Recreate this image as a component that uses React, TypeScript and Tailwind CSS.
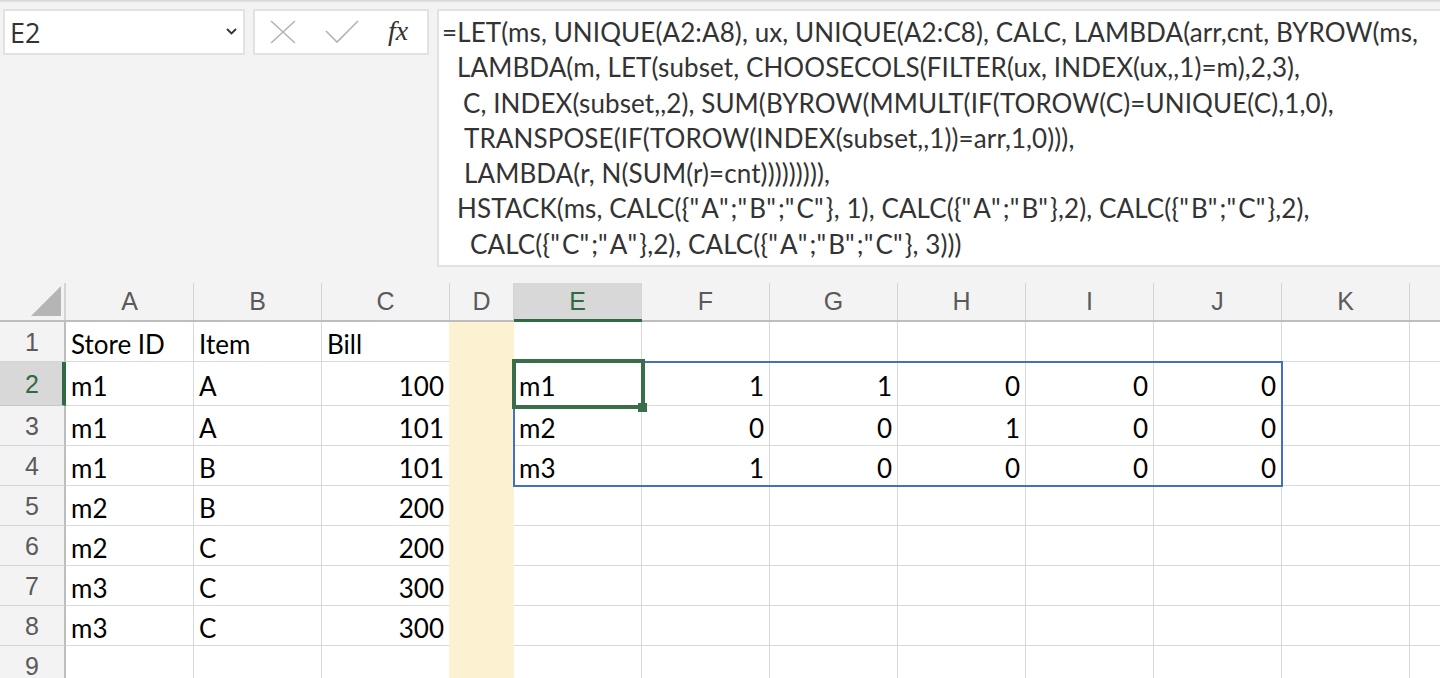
import React from "react";

const FONT = { fontFamily: "Lato, 'Open Sans', sans-serif" };
const HFONT = { fontFamily: "'Liberation Sans', Arial, sans-serif" };

type Col = { k: string; w: number; label?: boolean };
const cols: Col[] = [
  { k: "A", w: 128 },
  { k: "B", w: 128 },
  { k: "C", w: 128 },
  { k: "D", w: 64 },
  { k: "E", w: 128 },
  { k: "F", w: 128 },
  { k: "G", w: 128 },
  { k: "H", w: 128 },
  { k: "I", w: 128 },
  { k: "J", w: 128 },
  { k: "K", w: 128 },
  { k: "L", w: 128, label: false },
];

const rowHeights = [40, 44, 40, 40, 40, 40, 40, 40, 40];

type Cell = { v: string; right?: boolean };
const data: Record<string, Cell> = {};
const put = (ref: string, v: string | number) => {
  data[ref] = { v: String(v), right: typeof v === "number" };
};
put("A1", "Store ID");
put("B1", "Item");
put("C1", "Bill");
const src: [string, string, number][] = [
  ["m1", "A", 100],
  ["m1", "A", 101],
  ["m1", "B", 101],
  ["m2", "B", 200],
  ["m2", "C", 200],
  ["m3", "C", 300],
  ["m3", "C", 300],
];
src.forEach((r, i) => {
  put("A" + (i + 2), r[0]);
  put("B" + (i + 2), r[1]);
  put("C" + (i + 2), r[2]);
});
const res: [string, number, number, number, number, number][] = [
  ["m1", 1, 1, 0, 0, 0],
  ["m2", 0, 0, 1, 0, 0],
  ["m3", 1, 0, 0, 0, 0],
];
res.forEach((r, i) => {
  const row = i + 2;
  put("E" + row, r[0]);
  ["F", "G", "H", "I", "J"].forEach((c, j) => put(c + row, r[j + 1] as number));
});

const formula: { t: string; x: number }[] = [
  { t: "=LET(ms, UNIQUE(A2:A8), ux, UNIQUE(A2:C8), CALC, LAMBDA(arr,cnt, BYROW(ms,", x: 0 },
  { t: "LAMBDA(m, LET(subset, CHOOSECOLS(FILTER(ux, INDEX(ux,,1)=m),2,3),", x: 15 },
  { t: "C, INDEX(subset,,2), SUM(BYROW(MMULT(IF(TOROW(C)=UNIQUE(C),1,0),", x: 21 },
  { t: "TRANSPOSE(IF(TOROW(INDEX(subset,,1))=arr,1,0))),", x: 22 },
  { t: "LAMBDA(r, N(SUM(r)=cnt))))))))),", x: 22 },
  { t: 'HSTACK(ms, CALC({"A";"B";"C"}, 1), CALC({"A";"B"},2), CALC({"B";"C"},2),', x: 15 },
  { t: 'CALC({"C";"A"},2), CALC({"A";"B";"C"}, 3)))', x: 28 },
];

function renderLine(t: string) {
  const parts = t.split('"');
  const out: React.ReactNode[] = [];
  parts.forEach((p, i) => {
    if (i > 0)
      out.push(
        <span key={"q" + i} className="tracking-[2.1px]">
          "
        </span>
      );
    out.push(<React.Fragment key={"p" + i}>{p}</React.Fragment>);
  });
  return out;
}

function XIcon() {
  return (
    <svg width="26" height="24" viewBox="0 0 26 24">
      <path d="M1 1 L25 23 M25 1 L1 23" stroke="#b4b4b4" strokeWidth="1.6" fill="none" />
    </svg>
  );
}
function CheckIcon() {
  return (
    <svg width="34" height="24" viewBox="0 0 34 24">
      <path d="M1 11 L12 22 L33 1" stroke="#b4b4b4" strokeWidth="1.6" fill="none" />
    </svg>
  );
}

export default function App() {
  return (
    <div className="w-[1440px] h-[678px] overflow-hidden bg-white relative" style={FONT}>
      {/* Top formula area */}
      <div className="h-[283px] bg-[#f3f3f3] relative">
        <div className="absolute left-0 right-0 top-0 h-[3px] bg-gradient-to-b from-[#d4d4d4] to-[#f3f3f3]" />
        <div className="flex items-start pt-[9px] pl-[3px] gap-[8px]">
          <div className="w-[242px] h-[46px] bg-white border-2 border-[#e2e2e2] flex items-center pl-[5px] pr-[6px]">
            <span className="text-[27px] text-[#333] leading-none flex-1" style={{ fontFamily: "'Open Sans', sans-serif" }}>
              E2
            </span>
            <svg width="11" height="7" viewBox="0 0 11 7" className="mb-[2px]">
              <path d="M1 1 L5.5 5.5 L10 1" stroke="#333" strokeWidth="1.8" fill="none" />
            </svg>
          </div>
          <div className="w-[176px] h-[46px] bg-white border-2 border-[#e2e2e2] flex items-center pl-[15px]">
            <XIcon />
            <div className="w-[29px]" />
            <CheckIcon />
            <div className="w-[29px]" />
            <span
              className="text-[28px] italic text-[#333] leading-none pb-[2px]"
              style={{ fontFamily: "'Liberation Serif', 'Times New Roman', serif" }}
            >
              fx
            </span>
          </div>
          <div className="flex-1 h-[258px] bg-white border-2 border-[#e2e2e2] -mr-[4px] pl-[3px] pt-[4px]">
            {formula.map((l, i) => (
              <div
                key={i}
                className="whitespace-pre text-[26px] leading-[35.3px] text-[#333] tracking-[0.1px]"
                style={{ paddingLeft: l.x }}
              >
                {renderLine(l.t)}
              </div>
            ))}
          </div>
        </div>
      </div>

      {/* Column headers */}
      <div className="absolute left-0 top-[283px] flex h-[39px] bg-[#f3f3f3] border-b-2 border-[#bdbdbd] w-[1440px]">
        <div className="w-[66px] shrink-0 border-r-2 border-[#d4d4d4] relative">
          <svg width="30" height="30" viewBox="0 0 30 30" className="absolute left-[31px] top-[3px]">
            <path d="M30 0 L30 30 L0 30 Z" fill="#b5b5b5" />
          </svg>
        </div>
        {cols.map((c) => {
          const sel = c.k === "E";
          return (
            <div
              key={c.k}
              className={
                "shrink-0 flex items-center justify-center border-r border-[#d4d4d4] text-[25px] " +
                (sel ? "bg-[#d8d8d8] text-[#2e6b43] relative" : "text-[#5a5a5a]")
              }
              style={{ width: c.w, ...HFONT }}
            >
              {c.label === false ? "" : c.k}
              {sel && <div className="absolute left-0 right-[-1px] bottom-[-2px] h-[3px] bg-[#2e6b43]" />}
            </div>
          );
        })}
      </div>

      {/* Body */}
      <div className="absolute left-0 top-[322px] w-[1440px]">
        {rowHeights.map((h, ri) => {
          const r = ri + 1;
          const selRow = r === 2;
          return (
            <div key={r} className="flex" style={{ height: h }}>
              <div
                className={
                  "w-[66px] shrink-0 flex items-center justify-center text-[25px] border-b " +
                  (selRow
                    ? "bg-[#d8d8d8] text-[#2e6b43] border-r-[4px] border-r-[#2e6b43] border-b-[#c8c8c8] pl-[2px]"
                    : "bg-[#f3f3f3] text-[#5a5a5a] border-r-2 border-r-[#bdbdbd] border-b-[#d4d4d4]")
                }
                style={HFONT}
              >
                <span className="pt-[3px]">{r}</span>
              </div>
              {cols.map((c) => {
                const cell = data[c.k + r];
                const isD = c.k === "D";
                const isC = c.k === "C";
                return (
                  <div
                    key={c.k}
                    className={
                      "shrink-0 flex items-center px-[5px] text-[26px] text-black border-r border-b " +
                      (isD
                        ? "bg-[#fcf2d2] border-[#fcf2d2] "
                        : isC
                        ? "border-r-[#fcf2d2] border-b-[#d9d9d9] "
                        : "border-[#d9d9d9] ") +
                      (cell?.right ? "justify-end" : "justify-start")
                    }
                    style={{ width: c.w }}
                  >
                    {cell && <span className="pt-[4px] leading-none">{cell.v}</span>}
                  </div>
                );
              })}
            </div>
          );
        })}

        {/* Spill range (blue) */}
        <div className="absolute left-[513px] top-[39px] w-[770px] h-[126px] border-2 border-[#4470c0] pointer-events-none" />
        {/* Active cell (green) */}
        <div className="absolute left-[512px] top-[37px] w-[133px] h-[50px] border-[4px] border-[#3a6e4a] pointer-events-none" />
        <div className="absolute left-[638px] top-[81px] w-[9px] h-[9px] bg-[#3a6e4a]" />
      </div>
    </div>
  );
}
